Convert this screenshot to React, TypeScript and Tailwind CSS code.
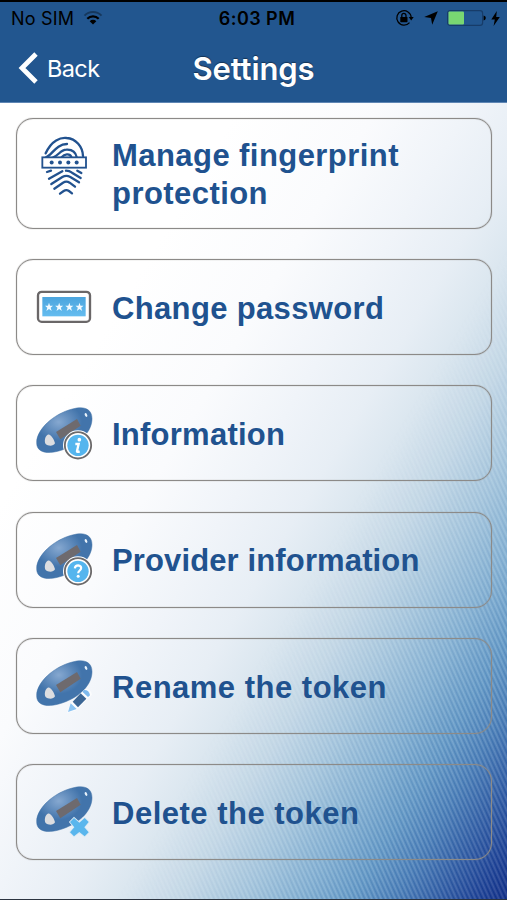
import type { ReactNode } from 'react';
import clsx from 'clsx';

const MENU_ITEMS = [
  { label: 'Manage fingerprint protection', icon: FingerprintIcon, spacing: 'tracking-[0.44px]', tall: true },
  { label: 'Change password', icon: PasswordIcon, spacing: 'tracking-[0.35px]' },
  { label: 'Information', icon: InfoIcon, spacing: 'tracking-[0.25px]' },
  { label: 'Provider information', icon: ProviderIcon, spacing: 'tracking-[0.13px]' },
  { label: 'Rename the token', icon: RenameIcon, spacing: 'tracking-[0.5px]' },
  { label: 'Delete the token', icon: DeleteIcon, spacing: 'tracking-[0.5px]' },
];

export default function App() {
  return (
    <div className="relative isolate h-[900px] w-full overflow-hidden border-b border-[#2b3440] bg-white font-['Liberation_Sans',Arial,sans-serif]">
      <Background />
      <header className="h-[103px] border-t-2 border-b border-t-black border-b-[#5f86b4] bg-[#22568f]">
        <StatusBar />
        <NavBar />
      </header>

      <main className="flex flex-col gap-[30.4px] px-[15.5px] pt-[15px]">
        {MENU_ITEMS.map((item) => (
          <button
            key={item.label}
            className={clsx(
              'flex w-full shrink-0 items-center gap-[17px] rounded-[17px] border border-[#8c8a88] pl-[18.5px] text-left shadow-[0_0_1px_#8c8a88,inset_0_0_1px_#8c8a88]',
              item.tall ? 'h-[110.5px]' : 'h-24',
            )}
          >
            <item.icon />
            <span className={clsx('w-[340px] pt-[3px] text-[31px] leading-[37.5px] font-bold text-[#20528f]', item.spacing)}>
              {item.label}
            </span>
          </button>
        ))}
      </main>
    </div>
  );
}

function Background() {
  return (
    <>
      <div className="absolute inset-0 -z-20 bg-[linear-gradient(121deg,#fff_260px,#fafbfd_380px,#f0f4f9_458px,#e7eef5_520px,#dae6ef_570px,#c6dae8_620px,#aacae0_670px,#88b5d6_720px,#659cc9_765px,#4a80ba_800px,#315fa7_835px,#1a3f95_870px,#0b2884_898px)]" />
      {/* Fine diagonal stripes, fading out towards the top left */}
      <div className="absolute inset-0 -z-10 bg-[repeating-linear-gradient(66deg,rgba(255,255,255,0.16)_0px,rgba(10,50,120,0.13)_2.15px,rgba(255,255,255,0.16)_4.3px)] [mask-image:linear-gradient(121deg,transparent_560px,black_780px)]" />
    </>
  );
}

function StatusBar() {
  return (
    <div className="grid h-8 grid-cols-3 items-center pr-[7px] pl-[11px] font-['Inter',sans-serif] text-[18px] text-black">
      <div className="flex items-center gap-[9px]">
        <span className="tracking-[0.2px]">No SIM</span>
        <svg className="h-[14px] w-[20px]" viewBox="0 0 20 14" fill="none" stroke="#000">
          <path d="M1.5 4.6a12 12 0 0 1 17 0" strokeWidth="2" opacity=".35" />
          <path d="M4.3 7.8a8 8 0 0 1 11.4 0" strokeWidth="2.2" />
          <path d="M10 13.6 6.7 10.2a4.6 4.6 0 0 1 6.6 0z" fill="#000" stroke="none" />
        </svg>
      </div>
      <span className="pl-[3px] text-center font-semibold tracking-[0.45px]">6:03 PM</span>
      <div className="flex items-center justify-end">
        <svg className="h-[18px] w-[19px]" viewBox="0 0 19 18">
          <path d="M16.2 8.5A7.2 7.2 0 1 0 14.5 13.6" fill="none" stroke="#000" strokeWidth="1.3" />
          <path d="M13.7 8h5l-2.5 3.4z" />
          <rect x="5.3" y="8" width="7.2" height="5.2" rx=".6" />
          <path d="M6.8 8.4V6.5a2.1 2.1 0 0 1 4.2 0v1.9" fill="none" stroke="#000" strokeWidth="1.3" />
        </svg>
        <svg className="ml-[10px] h-[14px] w-[14px]" viewBox="0 0 14 14">
          <path d="M13.8.2 8.2 13.8 7 7 .2 6z" />
        </svg>
        <svg className="ml-[9px] h-[16px] w-[39px]" viewBox="0 0 39 16">
          <rect x=".6" y=".6" width="35" height="14.8" rx="2.6" fill="none" stroke="#173c69" strokeWidth="1.2" />
          <rect x="1.5" y="1.5" width="15.5" height="13" rx="1" fill="#79d772" />
          <path d="M36.6 5.4q2.4.6 2.2 2.6t-2.2 2.6z" />
        </svg>
        <svg className="ml-[5px] h-[15px] w-[9px]" viewBox="0 0 9 15">
          <path d="M5.8 0 .3 8.4h3.5L2.6 15 8.8 6H5.2z" />
        </svg>
      </div>
    </div>
  );
}

function NavBar() {
  return (
    <div className="grid h-[69px] grid-cols-[1fr_auto_1fr] items-center font-['Inter',sans-serif] text-white">
      <button className="flex items-center gap-[9px] pl-[18px]">
        <svg className="mb-[2px] h-[32px] w-[20px]" viewBox="0 0 20 32">
          <path d="M18 2 4 16l14 14" fill="none" stroke="#fff" strokeWidth="4.8" />
        </svg>
        <span className="text-[23.5px] tracking-[-0.6px]">Back</span>
      </button>
      <h1 className="pt-[2px] text-[31px] font-semibold tracking-[-0.1px] [text-shadow:0_-1px_1px_rgba(0,0,0,0.4)]">Settings</h1>
    </div>
  );
}

function FingerprintIcon() {
  return (
    <svg className="mb-[15px] h-[60px] w-[60px] shrink-0" viewBox="0 0 180 180" fill="none" stroke="#22528f" strokeWidth="7" strokeLinecap="round">
      <path d="M32 52C50 12 77 4 95 6c28 2 48 26 49 54" />
      <path d="M33 64c18-6 30-40 63-40" />
      <path d="M55 64c16-6 22-23 39-23 16-1 28 7 31 23" />
      <path d="M80 64c8-10 24-13 29-1" />
      <rect x="22" y="64" width="131" height="31" fill="#fff" strokeWidth="5.5" strokeLinecap="butt" />
      {[50, 75, 100, 125].map((x) => (
        <circle key={x} cx={x} cy="79.5" r="6" fill="#22528f" stroke="none" />
      ))}
      <path d="M36 108 48 104M42 128 82 106M49 144 82 123q12-7 24 0l26 16M58 158 84 140q10-6 20 0l16 12M75 173l11-8q8-5 16 0l9 7" />
      <path d="M93 104q10 0 18 6l26 16M127 104l12 7" />
    </svg>
  );
}

function PasswordIcon() {
  return (
    <svg className="h-[34px] w-[60px] shrink-0" viewBox="0 0 180 102">
      <defs>
        <linearGradient id="pw" x1="0" y1="0" x2="0" y2="1">
          <stop offset="0" stopColor="#4ba4dd" />
          <stop offset="1" stopColor="#65bdf0" />
        </linearGradient>
      </defs>
      <rect x="9" y="5.5" width="156" height="90" rx="11" fill="#fff" stroke="#6a6768" strokeWidth="7" />
      <rect x="22" y="21" width="130" height="58" fill="url(#pw)" />
      {[42, 72.5, 103, 133.5].map((x) => (
        <path
          key={x}
          transform={`translate(${x} 51)`}
          d="M0-13 3-4 12-4 5 2 8 12 0 6-8 12-5 2-12-4-3-4z"
          fill="#f2faff"
        />
      ))}
    </svg>
  );
}

function Token({ children }: { children: ReactNode }) {
  return (
    <svg className="h-[55px] w-[60px] shrink-0" viewBox="0 0 180 165">
      <defs>
        <radialGradient id="token" cx=".4" cy=".32" r=".42">
          <stop offset="0" stopColor="#86a8d0" />
          <stop offset="1" stopColor="#4274ab" />
        </radialGradient>
      </defs>
      <path d="M5 110C4 71 56 23 112 9c36-10 59 0 59 29 0 38-35 73-79 90-42 17-87 18-87-18z" fill="url(#token)" stroke="#3d6ea5" strokeWidth="1.5" />
      <path d="m63 78 63-39 11 20-61 41z" fill="#6e6a6e" />
      <path d="M38 86c8-5 20 14 22 26-4 9-21 9-28 2-5-8-2-24 6-28z" fill="#dcdde0" />
      <ellipse cx="153" cy="27" rx="3.5" ry="6" transform="rotate(-28 153 27)" fill="#e9f3fb" />
      {children}
    </svg>
  );
}

function Badge({ children }: { children: ReactNode }) {
  return (
    <>
      <circle cx="129" cy="118" r="45" fill="#fff" />
      <circle cx="129" cy="118" r="39.5" fill="#fff" stroke="#6c6a6b" strokeWidth="5.5" />
      <circle cx="129" cy="118" r="32" fill="#55b5ee" />
      {children}
    </>
  );
}

function InfoIcon() {
  return (
    <Token>
      <Badge>
        <circle cx="133" cy="101" r="5.5" fill="#fff" />
        <path d="M121 114h10l-5 21q-1 5 8 1" fill="none" stroke="#fff" strokeWidth="7" />
      </Badge>
    </Token>
  );
}

function ProviderIcon() {
  return (
    <Token>
      <Badge>
        <path d="M119.5 109q1-9 10-9 9 1 9 8c0 8-9 7-9 16" fill="none" stroke="#fff" strokeWidth="6.5" />
        <circle cx="129.5" cy="133" r="4.5" fill="#fff" />
      </Badge>
    </Token>
  );
}

function RenameIcon() {
  return (
    <Token>
      <path d="M96 162 106 134 150 90q18 0 21 17l-47 47z" fill="#fff" opacity=".65" />
      <path d="m99 159 8-26 18 17z" fill="#8bc4f3" />
      <path d="m113 128 24-25 17 16-25 26z" fill="#3b6695" />
      <path d="m142 98 5-5q15-1 18 16l-6 5z" fill="#7db9ed" />
    </Token>
  );
}

function DeleteIcon() {
  return (
    <Token>
      <path
        d="m117 99 16 14 16-14 12 12-13 16 13 15-12 12-16-13-16 13-12-12 13-15-13-16z"
        fill="#5ab6ed"
        stroke="#dceaf4"
        strokeWidth="5"
        paintOrder="stroke"
      />
    </Token>
  );
}
